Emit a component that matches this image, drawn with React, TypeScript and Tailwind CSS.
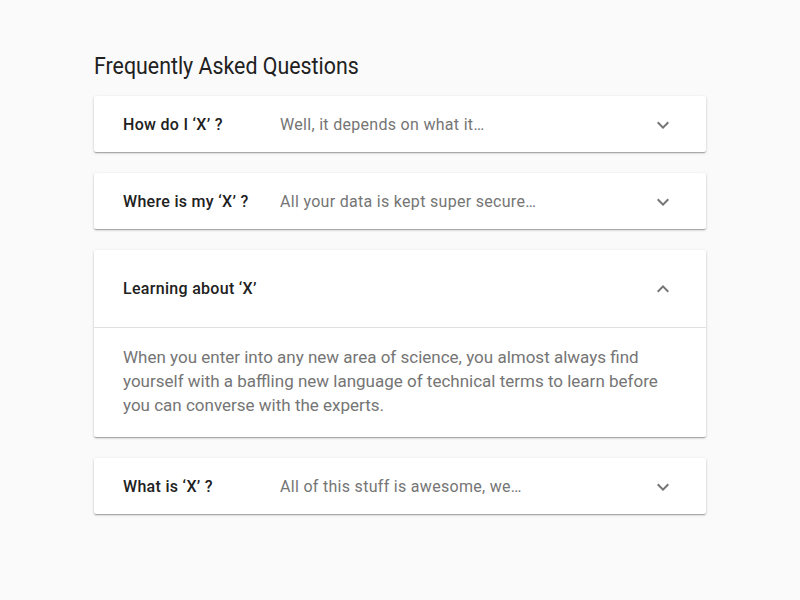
const faqs: Array<{
  question: string;
  preview: string;
  answer?: string;
  open?: boolean;
}> = [
  { question: "How do I ‘X’ ?", preview: "Well, it depends on what it…" },
  { question: "Where is my ‘X’ ?", preview: "All your data is kept super secure…" },
  {
    question: "Learning about ‘X’",
    preview: "",
    open: true,
    answer:
      "When you enter into any new area of science, you almost always find yourself with a baffling new language of technical terms to learn before you can converse with the experts.",
  },
  { question: "What is ‘X’ ?", preview: "All of this stuff is awesome, we…" },
];

function Chevron({ up }: { up?: boolean }) {
  return (
    <svg
      width="24"
      height="24"
      viewBox="0 0 24 24"
      className={up ? "rotate-180" : ""}
    >
      <path
        d="M16.59 8.59L12 13.17 7.41 8.59 6 10l6 6 6-6z"
        fill="#757575"
      />
    </svg>
  );
}

export default function App() {
  return (
    <div className="min-h-[600px] bg-[#fafafa] pt-[50px] font-['Roboto',sans-serif]">
      <div className="mx-auto w-[612px]">
        <h1 className="mb-[14px] origin-left scale-x-[0.89] whitespace-nowrap text-[24px] leading-8 text-[#212121]">
          Frequently Asked Questions
        </h1>

        <div className="flex flex-col gap-[21px]">
          {faqs.map((item) => (
            <div
              key={item.question}
              className="rounded-[2px] bg-white shadow-[0_1px_3px_rgba(0,0,0,0.2),0_1px_1px_rgba(0,0,0,0.14),0_2px_1px_-1px_rgba(0,0,0,0.12)]"
            >
              <div
                className={`flex items-center pl-[29px] pr-[31px] pt-px ${
                  item.open ? "h-[78px] border-b border-[#e0e0e0]" : "h-14"
                }`}
              >
                <p className="w-[157px] shrink-0 text-[16px] font-medium tracking-[0.3px] text-[#212121]">
                  {item.question}
                </p>
                <p className="flex-1 text-[16px] tracking-[0.3px] text-[#757575]">
                  {item.preview}
                </p>
                <Chevron up={item.open} />
              </div>

              {item.open && (
                <p className="pl-[29px] pr-7 pb-5 pt-[17px] text-[17px] leading-6 text-[#757575]">
                  {item.answer}
                </p>
              )}
            </div>
          ))}
        </div>
      </div>
    </div>
  );
}
